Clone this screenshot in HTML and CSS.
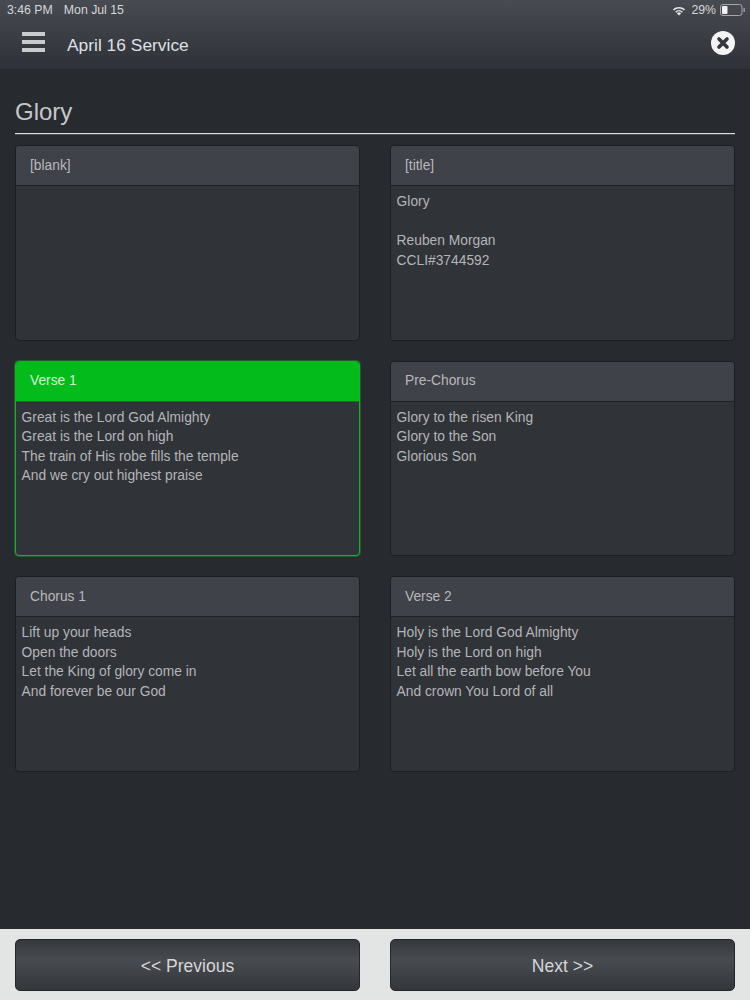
FILE: index.html
```html
<!DOCTYPE html>
<html lang="en">
<head>
<meta charset="utf-8">
<title>April 16 Service</title>
<link rel="stylesheet" href="styles.css">
</head>
<body>
<div class="app">
  <header class="topbar">
    <div class="status">
      <div class="status-left"><span>3:46 PM</span><span>Mon Jul 15</span></div>
      <div class="status-right">
        <svg class="wifi" width="14" height="11" viewBox="0 0 14 11"><path d="M7 10.6 4.9 8.4a3 3 0 0 1 4.2 0z" fill="#e6e7e8"/><path d="M3.7 7.2a4.7 4.7 0 0 1 6.6 0" fill="none" stroke="#e6e7e8" stroke-width="1.5"/><path d="M1.5 4.9a7.8 7.8 0 0 1 11 0" fill="none" stroke="#e6e7e8" stroke-width="1.5"/></svg>
        <span>29%</span>
        <svg class="battery" width="25" height="12" viewBox="0 0 25 12"><rect x=".5" y=".5" width="21.5" height="11" rx="2.5" fill="none" stroke="#a5a7aa"/><rect x="2" y="2" width="5.5" height="8" rx="1" fill="#f2f2f2"/><rect x="23.5" y="4" width="1.3" height="4" rx=".6" fill="#a5a7aa"/></svg>
      </div>
    </div>
    <div class="navrow">
      <div class="nav-left">
        <div class="burger"><i></i><i></i><i></i></div>
        <span class="nav-title">April 16 Service</span>
      </div>
      <svg class="close" width="24" height="24" viewBox="0 0 24 24"><circle cx="12" cy="12" r="12" fill="#f4f4f4"/><path d="M8 8l8 8M16 8l-8 8" stroke="#35383d" stroke-width="3.6" stroke-linecap="round"/></svg>
    </div>
  </header>

  <main class="content">
    <h1 class="song">Glory</h1>
    <div class="grid">
      <section class="card"><h2 class="card-head">[blank]</h2><div class="card-body"></div></section>
      <section class="card"><h2 class="card-head">[title]</h2><div class="card-body">Glory<br><br>Reuben Morgan<br>CCLI#3744592</div></section>
      <section class="card active"><h2 class="card-head">Verse 1</h2><div class="card-body">Great is the Lord God Almighty<br>Great is the Lord on high<br>The train of His robe fills the temple<br>And we cry out highest praise</div></section>
      <section class="card"><h2 class="card-head">Pre-Chorus</h2><div class="card-body">Glory to the risen King<br>Glory to the Son<br>Glorious Son</div></section>
      <section class="card"><h2 class="card-head">Chorus 1</h2><div class="card-body">Lift up your heads<br>Open the doors<br>Let the King of glory come in<br>And forever be our God</div></section>
      <section class="card"><h2 class="card-head">Verse 2</h2><div class="card-body">Holy is the Lord God Almighty<br>Holy is the Lord on high<br>Let all the earth bow before You<br>And crown You Lord of all</div></section>
    </div>
  </main>

  <footer class="footer">
    <button class="btn">&lt;&lt; Previous</button>
    <button class="btn">Next &gt;&gt;</button>
  </footer>
</div>
</body>
</html>
```

FILE: styles.css
```css
* { box-sizing: border-box; }
html, body { margin: 0; height: 100%; }
body {
  font-family: "Liberation Sans", Arial, sans-serif;
  background: #272a2f;
  overflow: hidden;
}
.app { height: 1000px; display: flex; flex-direction: column; }

.topbar {
  height: 69px;
  background: linear-gradient(#484b51, #2e3137);
  color: #e8e9ea;
  flex: none;
}
.status {
  height: 20px;
  padding: 0 5px 0 7px;
  display: flex;
  justify-content: space-between;
  align-items: center;
  font-size: 12.3px;
  color: #d6d7d9;
}
.status-left { display: flex; gap: 11px; }
.status-right { display: flex; align-items: center; gap: 4px; }
.wifi { margin-right: 1px; }
.navrow {
  height: 49px;
  padding: 0 15px 4px 22px;
  display: flex;
  align-items: center;
  justify-content: space-between;
}
.nav-left { display: flex; align-items: center; gap: 22px; }
.burger { width: 23px; display: flex; flex-direction: column; gap: 4px; margin-top: -2px; }
.burger i { display: block; height: 4px; background: #c9cbcc; }
.nav-title { font-size: 17.4px; color: #dfe0e2; padding-top: 6px; }
.close { margin-top: 0; }

.content { flex: 1; padding: 0 15px; }
.song {
  margin: 0 0 11px;
  height: 65px;
  padding-top: 28px;
  font-size: 24px;
  line-height: 30px;
  font-weight: 400;
  color: #c6c7c9;
  border-bottom: 1px solid #dcdddf;
  box-shadow: 0 1px 0 rgba(220, 221, 223, 0.2);
}
.grid {
  display: grid;
  grid-template-columns: 345px 345px;
  column-gap: 30px;
  row-gap: 20.1px;
  grid-auto-rows: 195.6px;
}
.card {
  border: 1px solid #1c1e22;
  border-radius: 4px;
  background: #303338;
  display: flex;
  flex-direction: column;
  overflow: hidden;
}
.card-head {
  margin: 0;
  height: 40px;
  flex: none;
  padding: 0 0 0.4px 14px;
  display: flex;
  align-items: center;
  font-size: 13.8px;
  font-weight: 400;
  color: #b8b9bc;
  background: #3f4248;
  border-bottom: 1px solid #1f2125;
}
.card-body {
  padding: 5.9px 5.6px;
  font-size: 13.8px;
  line-height: 19.6px;
  color: #b4b5b8;
}
.card.active {
  border-color: #1fae2c;
  box-shadow: 0 0 0 1px rgba(31, 174, 44, 0.35);
}
.card.active .card-head {
  background: #03bc1b;
  color: #d5f2d8;
  border-bottom-color: #1d6a28;
}

.footer {
  flex: none;
  height: 71px;
  background: #e3e5e5;
  padding: 10px 15px 9px;
  display: grid;
  grid-template-columns: 345px 345px;
  column-gap: 30px;
}
.btn {
  height: 52px;
  border: 1px solid #24262a;
  border-radius: 5px;
  background: linear-gradient(#35383d, #484b50 40%, #33363b);
  color: #d6d7d8;
  font: 17.5px "Liberation Sans", Arial, sans-serif;
  padding: 2px 0 0;
}
```
